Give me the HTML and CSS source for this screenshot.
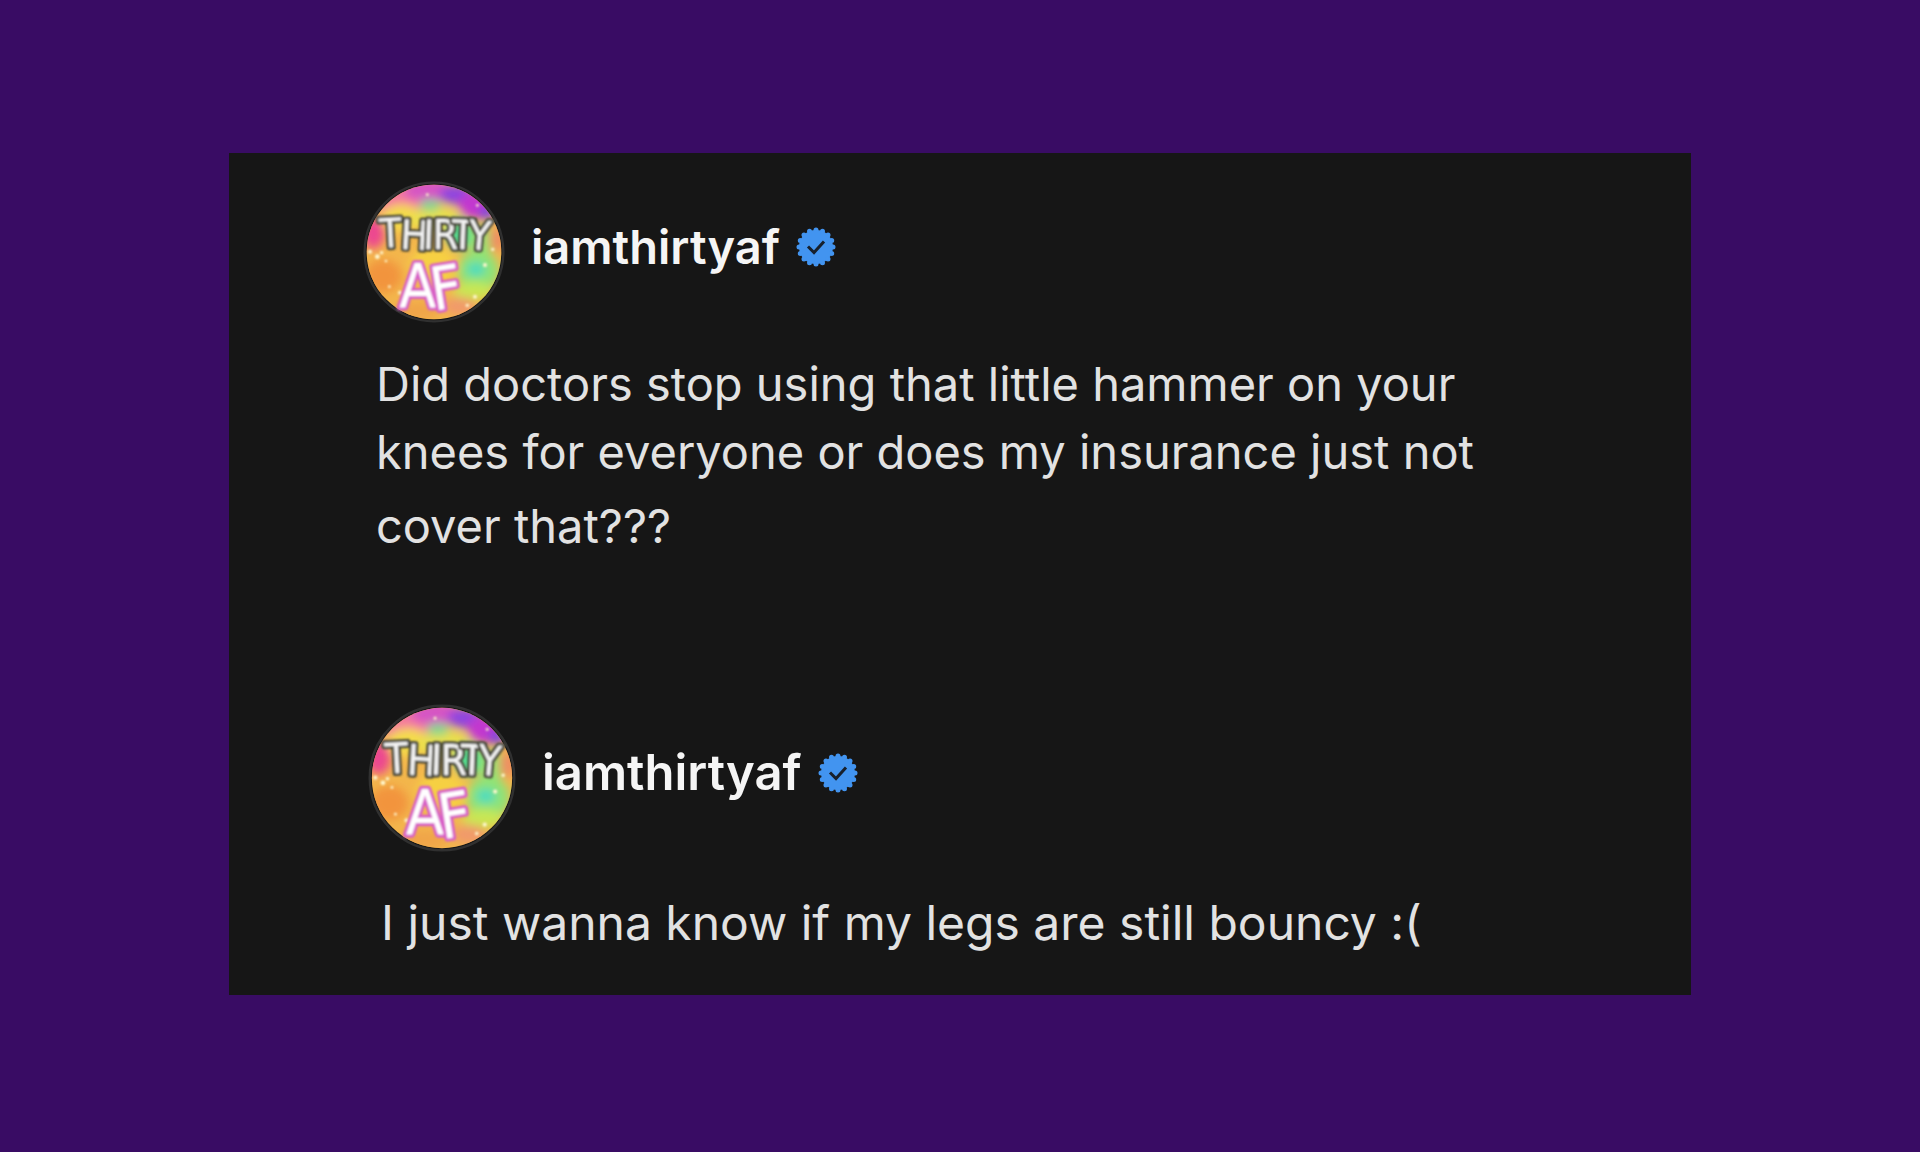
FILE: index.html
```
<!DOCTYPE html>
<html lang="en">
  <head>
    <meta charset="UTF-8">
    <title>iamthirtyaf</title>
    <link rel="stylesheet" href="styles.css">
  </head>
  <body>
    <!-- shared artwork -->
    <svg class="defs" width="0" height="0" aria-hidden="true">
      <defs>
        <filter id="blob" x="-50%" y="-50%" width="200%" height="200%">
          <feGaussianBlur stdDeviation="14"/>
        </filter>
        <filter id="soft">
          <feGaussianBlur stdDeviation="3"/>
        </filter>
        <clipPath id="disc"><circle cx="252" cy="248" r="202"/></clipPath>
        <symbol id="avatar" viewBox="39 35 426 426">
          <circle cx="252" cy="248" r="208" fill="#161616" stroke="#303030" stroke-width="7"/>
          <g clip-path="url(#disc)">
            <rect x="39" y="35" width="426" height="426" fill="#f3b64c"/>
            <g filter="url(#blob)">
              <ellipse cx="150" cy="95" rx="75" ry="45" fill="#f5799c"/>
              <ellipse cx="235" cy="62" rx="75" ry="34" fill="#d655c4"/>
              <ellipse cx="320" cy="76" rx="52" ry="30" fill="#8f45e0"/>
              <ellipse cx="375" cy="108" rx="50" ry="40" fill="#c338cf"/>
              <ellipse cx="410" cy="130" rx="24" ry="22" fill="#7a45e0"/>
              <ellipse cx="70" cy="190" rx="34" ry="48" fill="#ec4690"/>
              <ellipse cx="155" cy="145" rx="60" ry="40" fill="#f4dc4a"/>
              <ellipse cx="260" cy="150" rx="75" ry="38" fill="#e8e04e"/>
              <ellipse cx="240" cy="108" rx="32" ry="18" fill="#7fd68f"/>
              <ellipse cx="330" cy="195" rx="42" ry="46" fill="#53df91"/>
              <ellipse cx="395" cy="215" rx="36" ry="46" fill="#9ae070"/>
              <ellipse cx="440" cy="210" rx="22" ry="38" fill="#f08a62"/>
              <ellipse cx="100" cy="320" rx="55" ry="50" fill="#f2943c"/>
              <ellipse cx="250" cy="290" rx="70" ry="60" fill="#f6d043"/>
              <ellipse cx="385" cy="305" rx="62" ry="64" fill="#8fe377"/>
              <ellipse cx="378" cy="300" rx="28" ry="20" fill="#45dcc0"/>
              <ellipse cx="370" cy="365" rx="60" ry="26" fill="#c9e752"/>
              <ellipse cx="330" cy="410" rx="50" ry="28" fill="#f19a6a"/>
              <ellipse cx="200" cy="425" rx="70" ry="28" fill="#f0a548"/>
            </g>
            <g fill="#fff8cf" filter="url(#soft)">
              <circle cx="60" cy="247" r="6"/>
              <circle cx="82" cy="262" r="7"/>
              <circle cx="95" cy="250" r="5"/>
              <circle cx="108" cy="275" r="4"/>
              <circle cx="150" cy="370" r="6"/>
              <circle cx="118" cy="352" r="4"/>
              <circle cx="405" cy="287" r="6"/>
              <circle cx="375" cy="382" r="6"/>
              <circle cx="352" cy="408" r="5"/>
              <circle cx="428" cy="240" r="5"/>
              <circle cx="232" cy="76" r="4"/>
              <circle cx="382" cy="108" r="4"/>
            </g>
          </g>
          <g filter="url(#soft)">
            <text class="art art-thirty" x="90 150 218 248 304 352" y="236 238 238 238 238 238" rotate="-3 3 2 0 2 5">THIRTY</text>
            <text class="art art-af" x="148 252" y="412 424" rotate="0 -9">AF</text>
          </g>
        </symbol>
        <symbol id="verified" viewBox="0 0 40 40">
          <circle cx="20" cy="20" r="17" fill="#4294f0"/>
          <circle cx="20" cy="20" r="17" fill="none" stroke="#4294f0" stroke-width="5" stroke-linecap="round" pathLength="160" stroke-dasharray="0 10"/>
          <path d="M12 19.500l6 6L28 14.500" fill="none" stroke="#17202c" stroke-width="3"/>
        </symbol>
      </defs>
    </svg>

    <main class="card">
      <article class="post">
        <header class="author">
          <svg class="avatar" role="img" aria-label="Thirty AF"><use href="#avatar"/></svg>
          <h2 class="name">iamthirtyaf</h2>
          <svg class="badge" role="img" aria-label="Verified"><use href="#verified"/></svg>
        </header>
        <div class="text">
          <p>Did doctors stop using that little hammer on your<br>knees for everyone or does my insurance just not</p>
          <p>cover that???</p>
        </div>
      </article>

      <article class="post reply">
        <header class="author">
          <svg class="avatar" role="img" aria-label="Thirty AF"><use href="#avatar"/></svg>
          <h2 class="name">iamthirtyaf</h2>
          <svg class="badge" role="img" aria-label="Verified"><use href="#verified"/></svg>
        </header>
        <div class="text">
          <p>I just wanna know if my legs are still bouncy :(</p>
        </div>
      </article>
    </main>
  </body>
</html>
```
FILE: styles.css
```
body {
  margin: 0;
  padding: 153px 229px;
  background-color: #390c64;
  font-family: Inter, "Liberation Sans", sans-serif;
}
.defs {
  position: absolute;
}
.card {
  padding: 28px 134px 38px;
  background-color: #161616;
  color: #e2e2e2;
}
.author {
  display: flex;
  align-items: center;
}
.avatar {
  flex: none;
  width: 142px;
  height: 142px;
}
.name {
  margin: 0 16px 10px 26px;
  color: #f5f5f5;
  font-size: 47px;
  font-weight: 600;
  line-height: 56px;
}
.badge {
  flex: none;
  width: 40px;
  height: 40px;
  margin-bottom: 10px;
}
.text {
  padding-left: 13px;
  margin-top: 27px;
  font-size: 47px;
  line-height: 68px;
  white-space: nowrap;
}
.text p {
  margin: 0;
}
.text p + p {
  margin-top: 6px;
}

.reply {
  margin-top: 144px;
  padding-left: 5px;
}
.reply .avatar {
  width: 148px;
  height: 148px;
}
.reply .name {
  font-size: 49px;
}
.reply .text {
  margin-top: 37px;
  font-size: 48px;
}

/* avatar lettering */
.art {
  font-family: "DejaVu Sans Condensed", "DejaVu Sans", sans-serif;
  paint-order: stroke;
  stroke-linejoin: round;
}
.art-thirty {
  font-size: 122px;
  fill: #f4f4f4;
  stroke: #4a483c;
  stroke-width: 16px;
}
.art-af {
  font-size: 180px;
  fill: #fff;
  stroke: #d860c8;
  stroke-width: 18px;
}
```
